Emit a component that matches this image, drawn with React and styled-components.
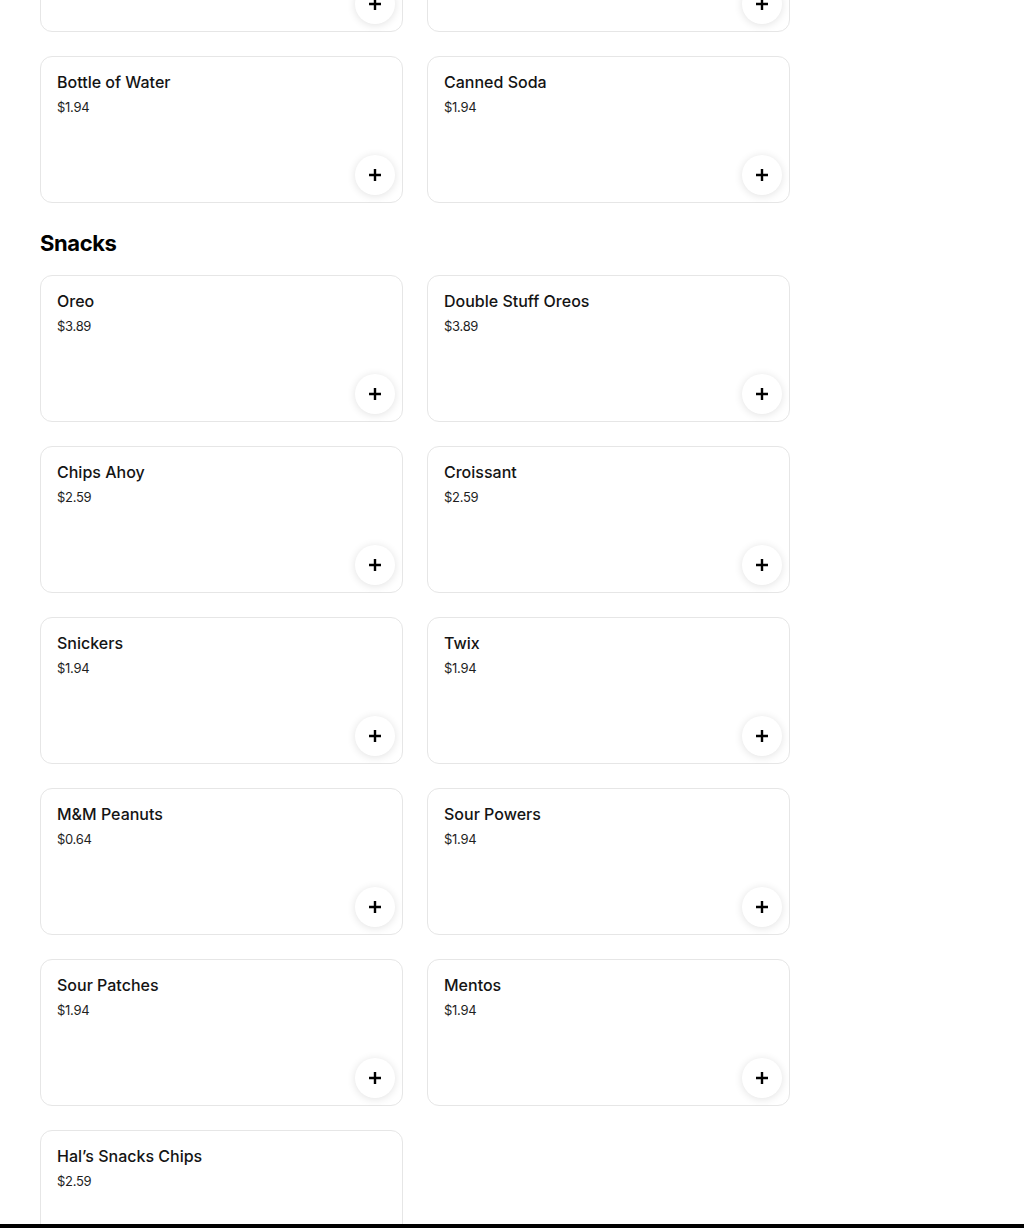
import styled, { createGlobalStyle } from "styled-components";

const GlobalStyle = createGlobalStyle`
  html, body {
    margin: 0;
    padding: 0;
    background: #ffffff;
    font-family: Inter, "Noto Sans", Roboto, sans-serif;
    color: #000000;
  }
`;

const Page = styled.main`
  padding: 0 40px 40px;
  margin-top: -115px;
  width: 750px;
`;

const Section = styled.section`
  margin-bottom: 24px;
`;

const SectionTitle = styled.h2`
  margin: 0 0 16px;
  font-size: 22px;
  line-height: 32px;
  font-weight: 700;
  letter-spacing: -0.4px;
`;

const Grid = styled.div`
  display: grid;
  grid-template-columns: repeat(2, 363px);
  gap: 24px;
`;

const Card = styled.div`
  box-sizing: border-box;
  height: 147px;
  border: 1px solid #e6e6e6;
  border-radius: 12px;
  padding: 14px 7px 7px 16px;
  display: flex;
  flex-direction: column;
  background: #fff;
`;

const ItemName = styled.div`
  font-size: 16px;
  line-height: 22px;
  font-weight: 500;
  color: #141414;
`;

const ItemPrice = styled.div`
  margin-top: 5px;
  font-size: 13px;
  line-height: 18px;
  font-weight: 400;
  color: #1f1f1f;
  letter-spacing: -0.3px;
`;

const AddButton = styled.button`
  margin-top: auto;
  align-self: flex-end;
  width: 40px;
  height: 40px;
  border: none;
  border-radius: 50%;
  background: #fff;
  box-shadow: 0 1px 8px rgba(0, 0, 0, 0.12);
  display: flex;
  align-items: center;
  justify-content: center;
  padding: 0;
  cursor: pointer;
`;

const BottomBar = styled.div`
  position: fixed;
  left: 0;
  right: 0;
  bottom: 0;
  height: 4px;
  background: #000;
`;

const PlusIcon = () => (
  <svg width="14" height="14" viewBox="0 0 14 14" aria-hidden="true">
    <path d="M7 1v12M1 7h12" stroke="#000" strokeWidth="2.4" />
  </svg>
);

const drinks = [
  { name: "Bottle of Coke", price: "$2.59" },
  { name: "Canned Sprite", price: "$1.94" },
  { name: "Bottle of Water", price: "$1.94" },
  { name: "Canned Soda", price: "$1.94" },
];

const snacks = [
  { name: "Oreo", price: "$3.89" },
  { name: "Double Stuff Oreos", price: "$3.89" },
  { name: "Chips Ahoy", price: "$2.59" },
  { name: "Croissant", price: "$2.59" },
  { name: "Snickers", price: "$1.94" },
  { name: "Twix", price: "$1.94" },
  { name: "M&M Peanuts", price: "$0.64" },
  { name: "Sour Powers", price: "$1.94" },
  { name: "Sour Patches", price: "$1.94" },
  { name: "Mentos", price: "$1.94" },
  { name: "Hal\u2019s Snacks Chips", price: "$2.59" },
];

function MenuCard({ item }) {
  return (
    <Card>
      <ItemName>{item.name}</ItemName>
      <ItemPrice>{item.price}</ItemPrice>
      <AddButton aria-label={`Add ${item.name}`}>
        <PlusIcon />
      </AddButton>
    </Card>
  );
}

export default function App() {
  return (
    <>
      <GlobalStyle />
      <Page>
        <Section>
          <Grid>
            {drinks.map((item) => (
              <MenuCard key={item.name} item={item} />
            ))}
          </Grid>
        </Section>
        <Section>
          <SectionTitle>Snacks</SectionTitle>
          <Grid>
            {snacks.map((item) => (
              <MenuCard key={item.name} item={item} />
            ))}
          </Grid>
        </Section>
      </Page>
      <BottomBar />
    </>
  );
}
